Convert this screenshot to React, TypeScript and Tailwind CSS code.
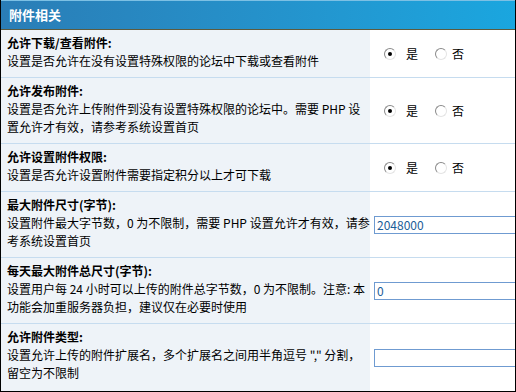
import React from "react";

type Row = {
  title: string;
  lines: string[];
  kind: "radio" | "input";
  value?: string;
};

const rows: Row[] = [
  {
    title: "允许下载/查看附件:",
    lines: ["设置是否允许在没有设置特殊权限的论坛中下载或查看附件"],
    kind: "radio",
  },
  {
    title: "允许发布附件:",
    lines: [
      "设置是否允许上传附件到没有设置特殊权限的论坛中。需要 PHP 设",
      "置允许才有效，请参考系统设置首页",
    ],
    kind: "radio",
  },
  {
    title: "允许设置附件权限:",
    lines: ["设置是否允许设置附件需要指定积分以上才可下载"],
    kind: "radio",
  },
  {
    title: "最大附件尺寸(字节):",
    lines: [
      "设置附件最大字节数，0 为不限制，需要 PHP 设置允许才有效，请参",
      "考系统设置首页",
    ],
    kind: "input",
    value: "2048000",
  },
  {
    title: "每天最大附件总尺寸(字节):",
    lines: [
      "设置用户每 24 小时可以上传的附件总字节数，0 为不限制。注意: 本",
      "功能会加重服务器负担，建议仅在必要时使用",
    ],
    kind: "input",
    value: "0",
  },
  {
    title: "允许附件类型:",
    lines: [
      "设置允许上传的附件扩展名，多个扩展名之间用半角逗号 \",\" 分割，",
      "留空为不限制",
    ],
    kind: "input",
    value: "",
  },
];

const Radio = ({ checked }: { checked?: boolean }) => (
  <span className="flex h-[12px] w-[12px] items-center justify-center rounded-full border border-t-[#8a8a8a] border-l-[#8a8a8a] border-r-[#e4e4e4] border-b-[#e4e4e4] bg-white">
    {checked && <span className="h-[4px] w-[4px] rounded-full bg-black" />}
  </span>
);

export default function App() {
  return (
    <div
      className="flex h-[392px] w-[516px] flex-col overflow-hidden border-x border-b border-black bg-white text-[12px] leading-[18px] text-black"
      style={{ fontFamily: '"Noto Sans CJK SC", "Liberation Sans", sans-serif' }}
    >
      {/* Header */}
      <div className="flex h-[29px] shrink-0 items-center border-t border-[#7cc0e4] bg-gradient-to-r from-[#2a7db6] to-[#1aa6df] pl-[8px] text-[13px] font-bold text-white">
        附件相关
      </div>
      <div className="h-px shrink-0 bg-[#5d5b3e]" />

      {rows.map((r, i) => (
        <div
          key={i}
          className={
            i === rows.length - 1
              ? "flex flex-1"
              : "flex shrink-0 border-b border-[#c6dcef]"
          }
        >
          <div className="w-[369px] shrink-0 whitespace-nowrap bg-[#eef3f8] pt-[4px] pb-[7px] pl-[6px]">
            <div className="font-bold">{r.title}</div>
            {r.lines.map((l, j) => (
              <div key={j}>{l}</div>
            ))}
          </div>
          <div className="flex flex-1 items-center pl-[4px]">
            {r.kind === "radio" ? (
              <div className="ml-[10px] flex items-center">
                <Radio checked />
                <span className="ml-[10px]">是</span>
                <span className="ml-[17px]">
                  <Radio />
                </span>
                <span className="ml-[5px]">否</span>
              </div>
            ) : (
              <div className="h-[18px] w-[200px] shrink-0 border border-[#6f9bd1] bg-white pl-[2px] leading-[16px] text-[#1b5d97]">
                {r.value}
              </div>
            )}
          </div>
        </div>
      ))}
    </div>
  );
}
